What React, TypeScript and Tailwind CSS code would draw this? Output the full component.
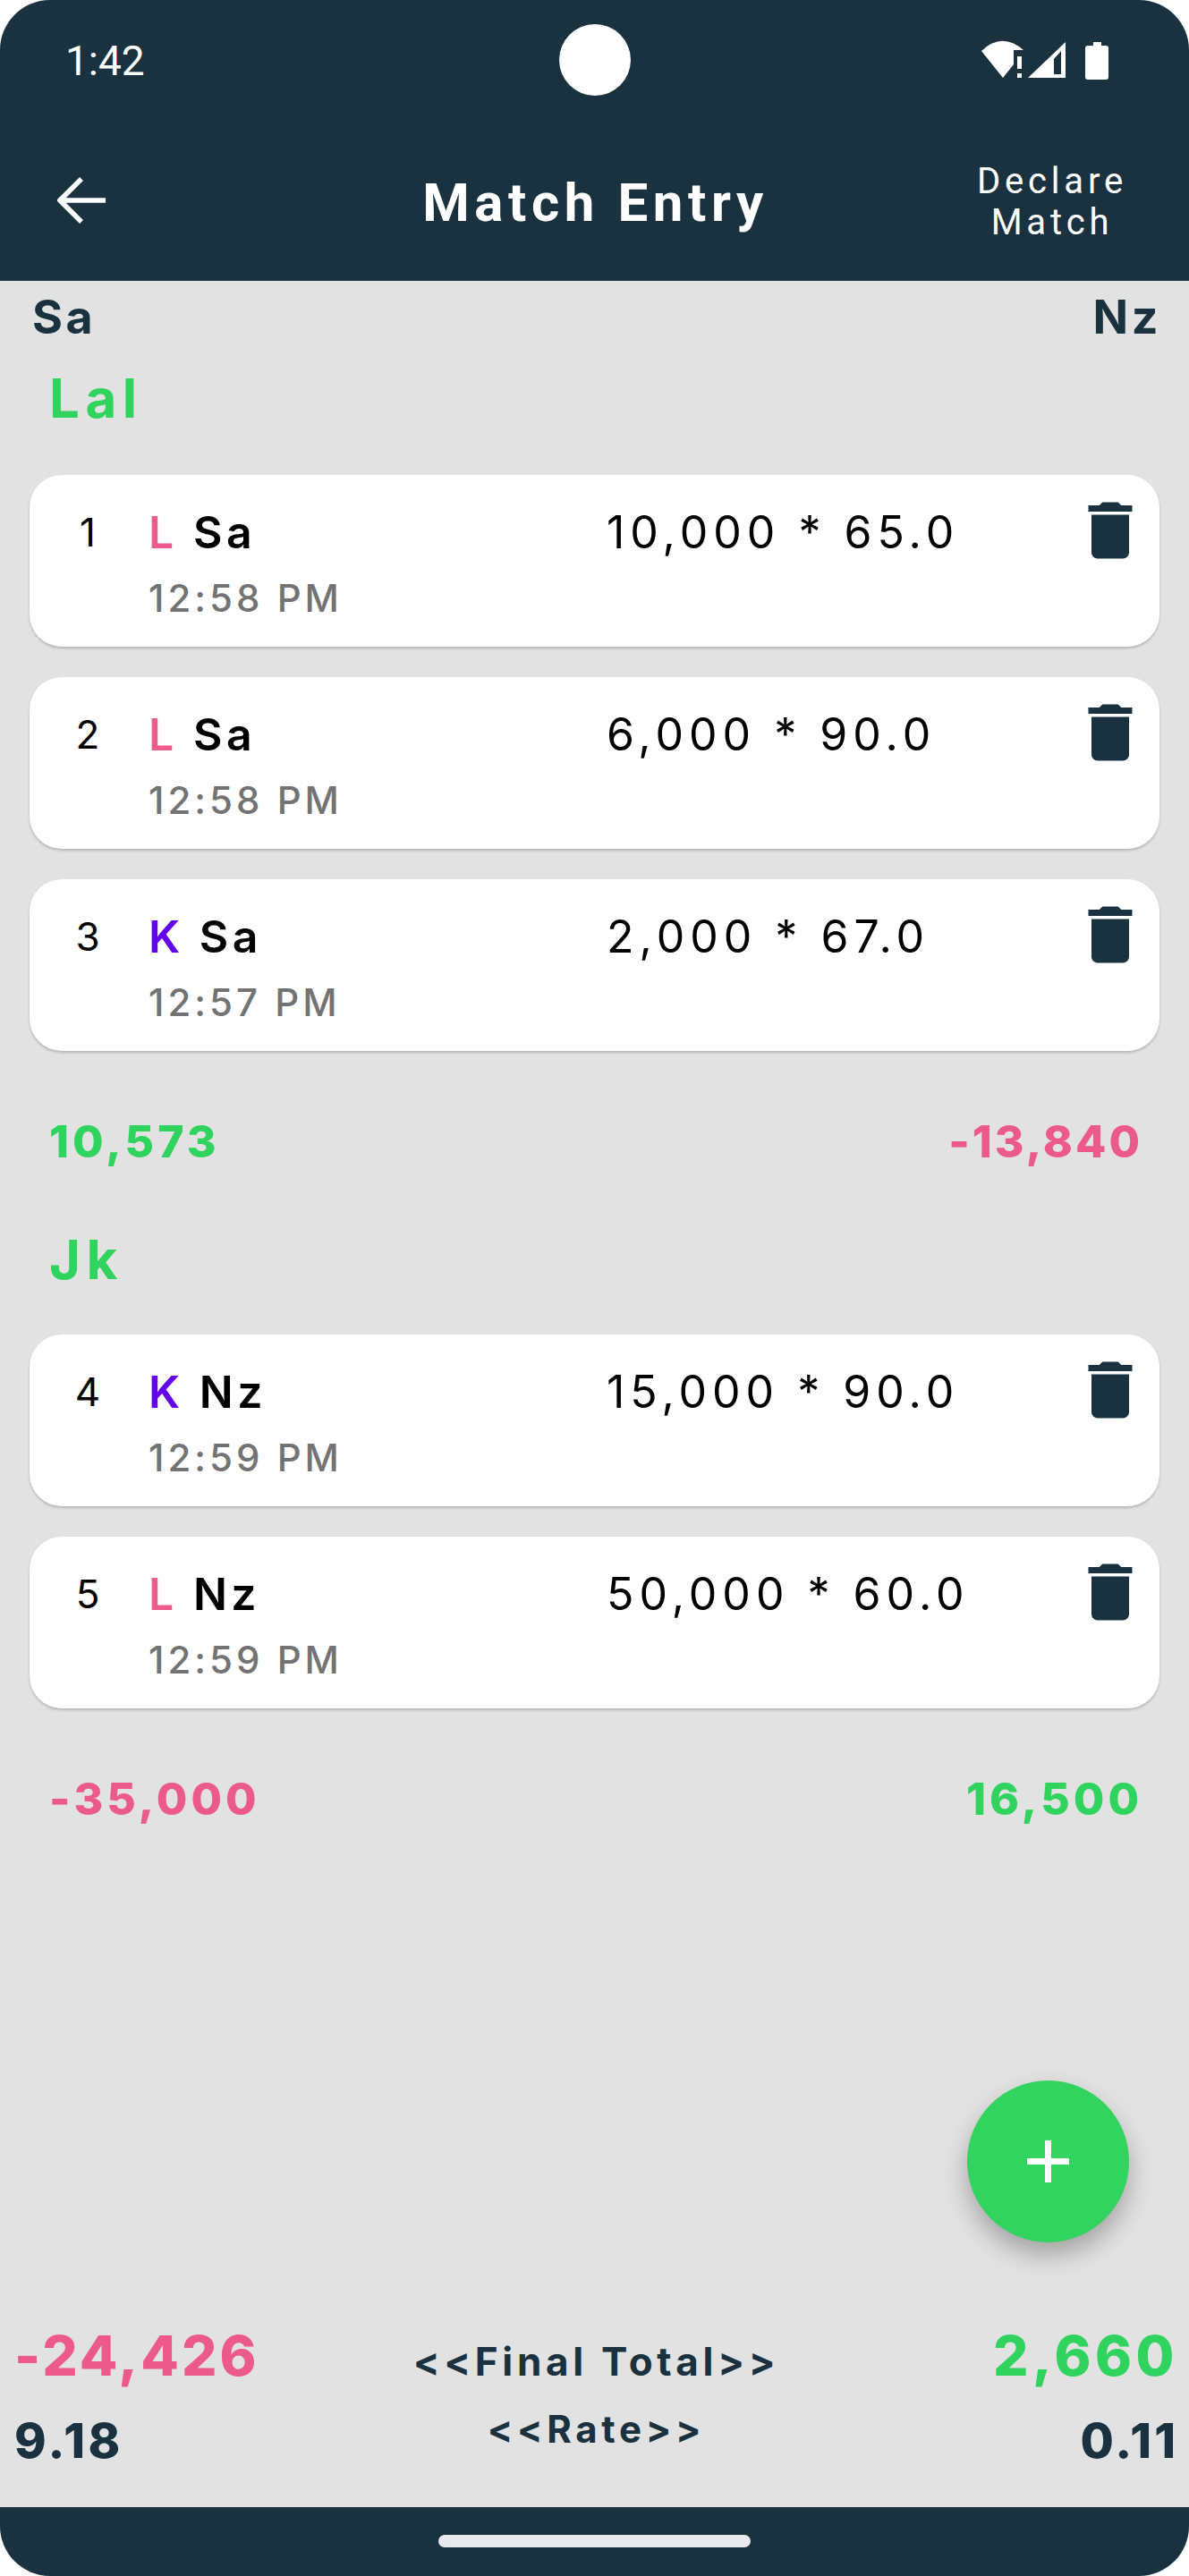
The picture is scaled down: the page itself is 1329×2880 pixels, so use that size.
const navy = "text-[#1a3240]"

type Entry = {
  no: number
  kind: "L" | "K"
  team: string
  time: string
  amount: string
}

const lal: Entry[] = [
  { no: 1, kind: "L", team: "Sa", time: "12:58 PM", amount: "10,000 * 65.0" },
  { no: 2, kind: "L", team: "Sa", time: "12:58 PM", amount: "6,000 * 90.0" },
  { no: 3, kind: "K", team: "Sa", time: "12:57 PM", amount: "2,000 * 67.0" },
]

const jk: Entry[] = [
  { no: 4, kind: "K", team: "Nz", time: "12:59 PM", amount: "15,000 * 90.0" },
  { no: 5, kind: "L", team: "Nz", time: "12:59 PM", amount: "50,000 * 60.0" },
]

const StatusIcons = () => (
  <svg width="145" height="45" viewBox="1096 45 145 45" fill="white">
    <path d="M1097 57Q1120 35 1144 56L1133 56L1133 72L1121 87Z" />
    <rect x="1137" y="63" width="5" height="14" />
    <rect x="1137" y="82" width="5" height="5" />
    <path fillRule="evenodd" d="M1191 47V87H1149ZM1186 57L1178 66V83H1186Z" />
    <path d="M1222 47h9v4h5a3 3 0 0 1 3 3v32a3 3 0 0 1-3 3h-20a3 3 0 0 1-3-3V54a3 3 0 0 1 3-3h6z" />
  </svg>
)

const BackArrow = () => (
  <svg width="54" height="52" viewBox="0 0 54 52" fill="none" stroke="white" strokeWidth="5.5">
    <path d="M54 26H4M27 2L3 26L27 50" />
  </svg>
)

const TrashIcon = () => (
  <svg width="84" height="84" viewBox="0 0 24 24" fill="#1a3240">
    <path d="M6 19c0 1.1.9 2 2 2h8c1.1 0 2-.9 2-2V7H6v12zM19 4h-3.5l-1-1h-5l-1 1H5v2h14V4z" />
  </svg>
)

const EntryCard = ({ entry }: { entry: Entry }) => (
  <div className="relative flex h-[192px] rounded-[36px] bg-white pt-[34px] shadow-[0_2px_3px_rgba(0,0,0,0.2)]">
    <div className="ml-[40px] w-[50px] text-center text-[44px] leading-[60px] text-black">{entry.no}</div>
    <div className="ml-[43px] w-[512px]">
      <div className="text-[50px] leading-[60px] font-semibold tracking-[4.5px] text-black">
        <span className={entry.kind === "L" ? "text-[#ec5a8c]" : "text-[#6200ee]"}>{entry.kind}</span> {entry.team}
      </div>
      <div className="mt-[19px] text-[42px] leading-[50px] font-medium tracking-[4px] text-[#737373]">{entry.time}</div>
    </div>
    <div className="text-[50px] leading-[60px] tracking-[6px] text-black">{entry.amount}</div>
    <div className="absolute top-[20px] right-[13px]">
      <TrashIcon />
    </div>
  </div>
)

const Totals = ({ left, right, leftPink }: { left: string; right: string; leftPink?: boolean }) => (
  <div className="mt-[71px] flex h-[60px] items-center justify-between pr-[52px] pl-[55px] text-[50px] font-extrabold tracking-[4px]">
    <span className={leftPink ? "text-[#ec5a8c]" : "text-[#30d35d]"}>{left}</span>
    <span className={leftPink ? "text-[#30d35d]" : "tracking-[3px] text-[#ec5a8c]"}>{right}</span>
  </div>
)

export default function App() {
  return (
    <div className="h-[2880px] w-[1329px] bg-white font-['Inter',sans-serif]">
      <div className="relative flex h-full flex-col overflow-hidden rounded-[56px] bg-[#e2e2e2]">
        <header className="h-[314px] shrink-0 bg-[#1a3240] text-white">
          <div className="relative flex h-[134px] items-start justify-between">
            <span className="mt-[41px] ml-[73px] font-['Roboto',sans-serif] text-[46px] leading-[54px]">1:42</span>
            <div className="absolute top-[27px] left-[625px] h-[80px] w-[80px] rounded-full bg-white" />
            <div className="mt-[45px] mr-[88px]">
              <StatusIcons />
            </div>
          </div>
          <div className="flex items-start justify-between font-['Roboto',sans-serif]">
            <div className="mt-[64px] ml-[64px]">
              <BackArrow />
            </div>
            <h1 className="mt-[53px] ml-[132px] text-[60px] leading-[80px] font-bold tracking-[5.6px]">Match Entry</h1>
            <div className="mt-[46px] mr-[58px] w-[190px] text-center text-[40px] leading-[46px] tracking-[4.8px]">
              Declare Match
            </div>
          </div>
        </header>

        <main className="flex flex-1 flex-col">
          <div className={`mt-[19px] flex h-[44px] items-center justify-between pr-[31px] pl-[36px] text-[52px] font-bold tracking-[3.5px] ${navy}`}>
            <span>Sa</span>
            <span>Nz</span>
          </div>
          <div className="mt-[38px] h-[60px] pl-[55px] text-[60px] leading-[60px] font-bold tracking-[6.5px] text-[#30d35d]">Lal</div>
          <div className="mt-[56px] flex flex-col gap-[34px] pr-[33px] pl-[33px]">
            {lal.map((entry) => (
              <EntryCard key={entry.no} entry={entry} />
            ))}
          </div>
          <Totals left="10,573" right="-13,840" />
          <div className="mt-[72px] h-[60px] pl-[55px] text-[60px] leading-[60px] font-bold tracking-[6.5px] text-[#30d35d]">Jk</div>
          <div className="mt-[54px] flex flex-col gap-[34px] pr-[33px] pl-[33px]">
            {jk.map((entry) => (
              <EntryCard key={entry.no} entry={entry} />
            ))}
          </div>
          <Totals left="-35,000" right="16,500" leftPink />

          <div className="mt-auto grid h-[204px] grid-cols-[1fr_auto_1fr] pr-[12px] pl-[16px]">
            <div>
              <div className="h-[70px] text-[62px] leading-[70px] font-extrabold tracking-[3px] text-[#ec5a8c]">-24,426</div>
              <div className={`mt-[30px] text-[54px] leading-[60px] font-extrabold tracking-[3.5px] ${navy}`}>9.18</div>
            </div>
            <div className={`pt-[11px] text-center font-bold tracking-[4.7px] ${navy}`}>
              <div className="text-[44px] leading-[60px]">{"<<Final Total>>"}</div>
              <div className="mt-[16px] text-[42px] leading-[60px]">{"<<Rate>>"}</div>
            </div>
            <div className="text-right">
              <div className="h-[70px] text-[62px] leading-[70px] font-extrabold tracking-[4.5px] text-[#30d35d]">2,660</div>
              <div className={`mt-[30px] text-[54px] leading-[60px] font-extrabold tracking-[3px] ${navy}`}>0.11</div>
            </div>
          </div>
        </main>

        <footer className="flex h-[77px] shrink-0 justify-center bg-[#1a3240] pt-[31px]">
          <div className="h-[14px] w-[349px] rounded-full bg-[#e8eaed]" />
        </footer>

        <button className="absolute top-[2326px] left-[1081px] flex h-[181px] w-[181px] items-center justify-center rounded-full bg-[#32d35f] shadow-[0_14px_28px_rgba(0,0,0,0.28)]">
          <svg width="47" height="47" viewBox="0 0 47 47" fill="white">
            <path d="M20 0h7v20h20v7H27v20h-7V27H0v-7h20z" />
          </svg>
        </button>
      </div>
    </div>
  )
}
